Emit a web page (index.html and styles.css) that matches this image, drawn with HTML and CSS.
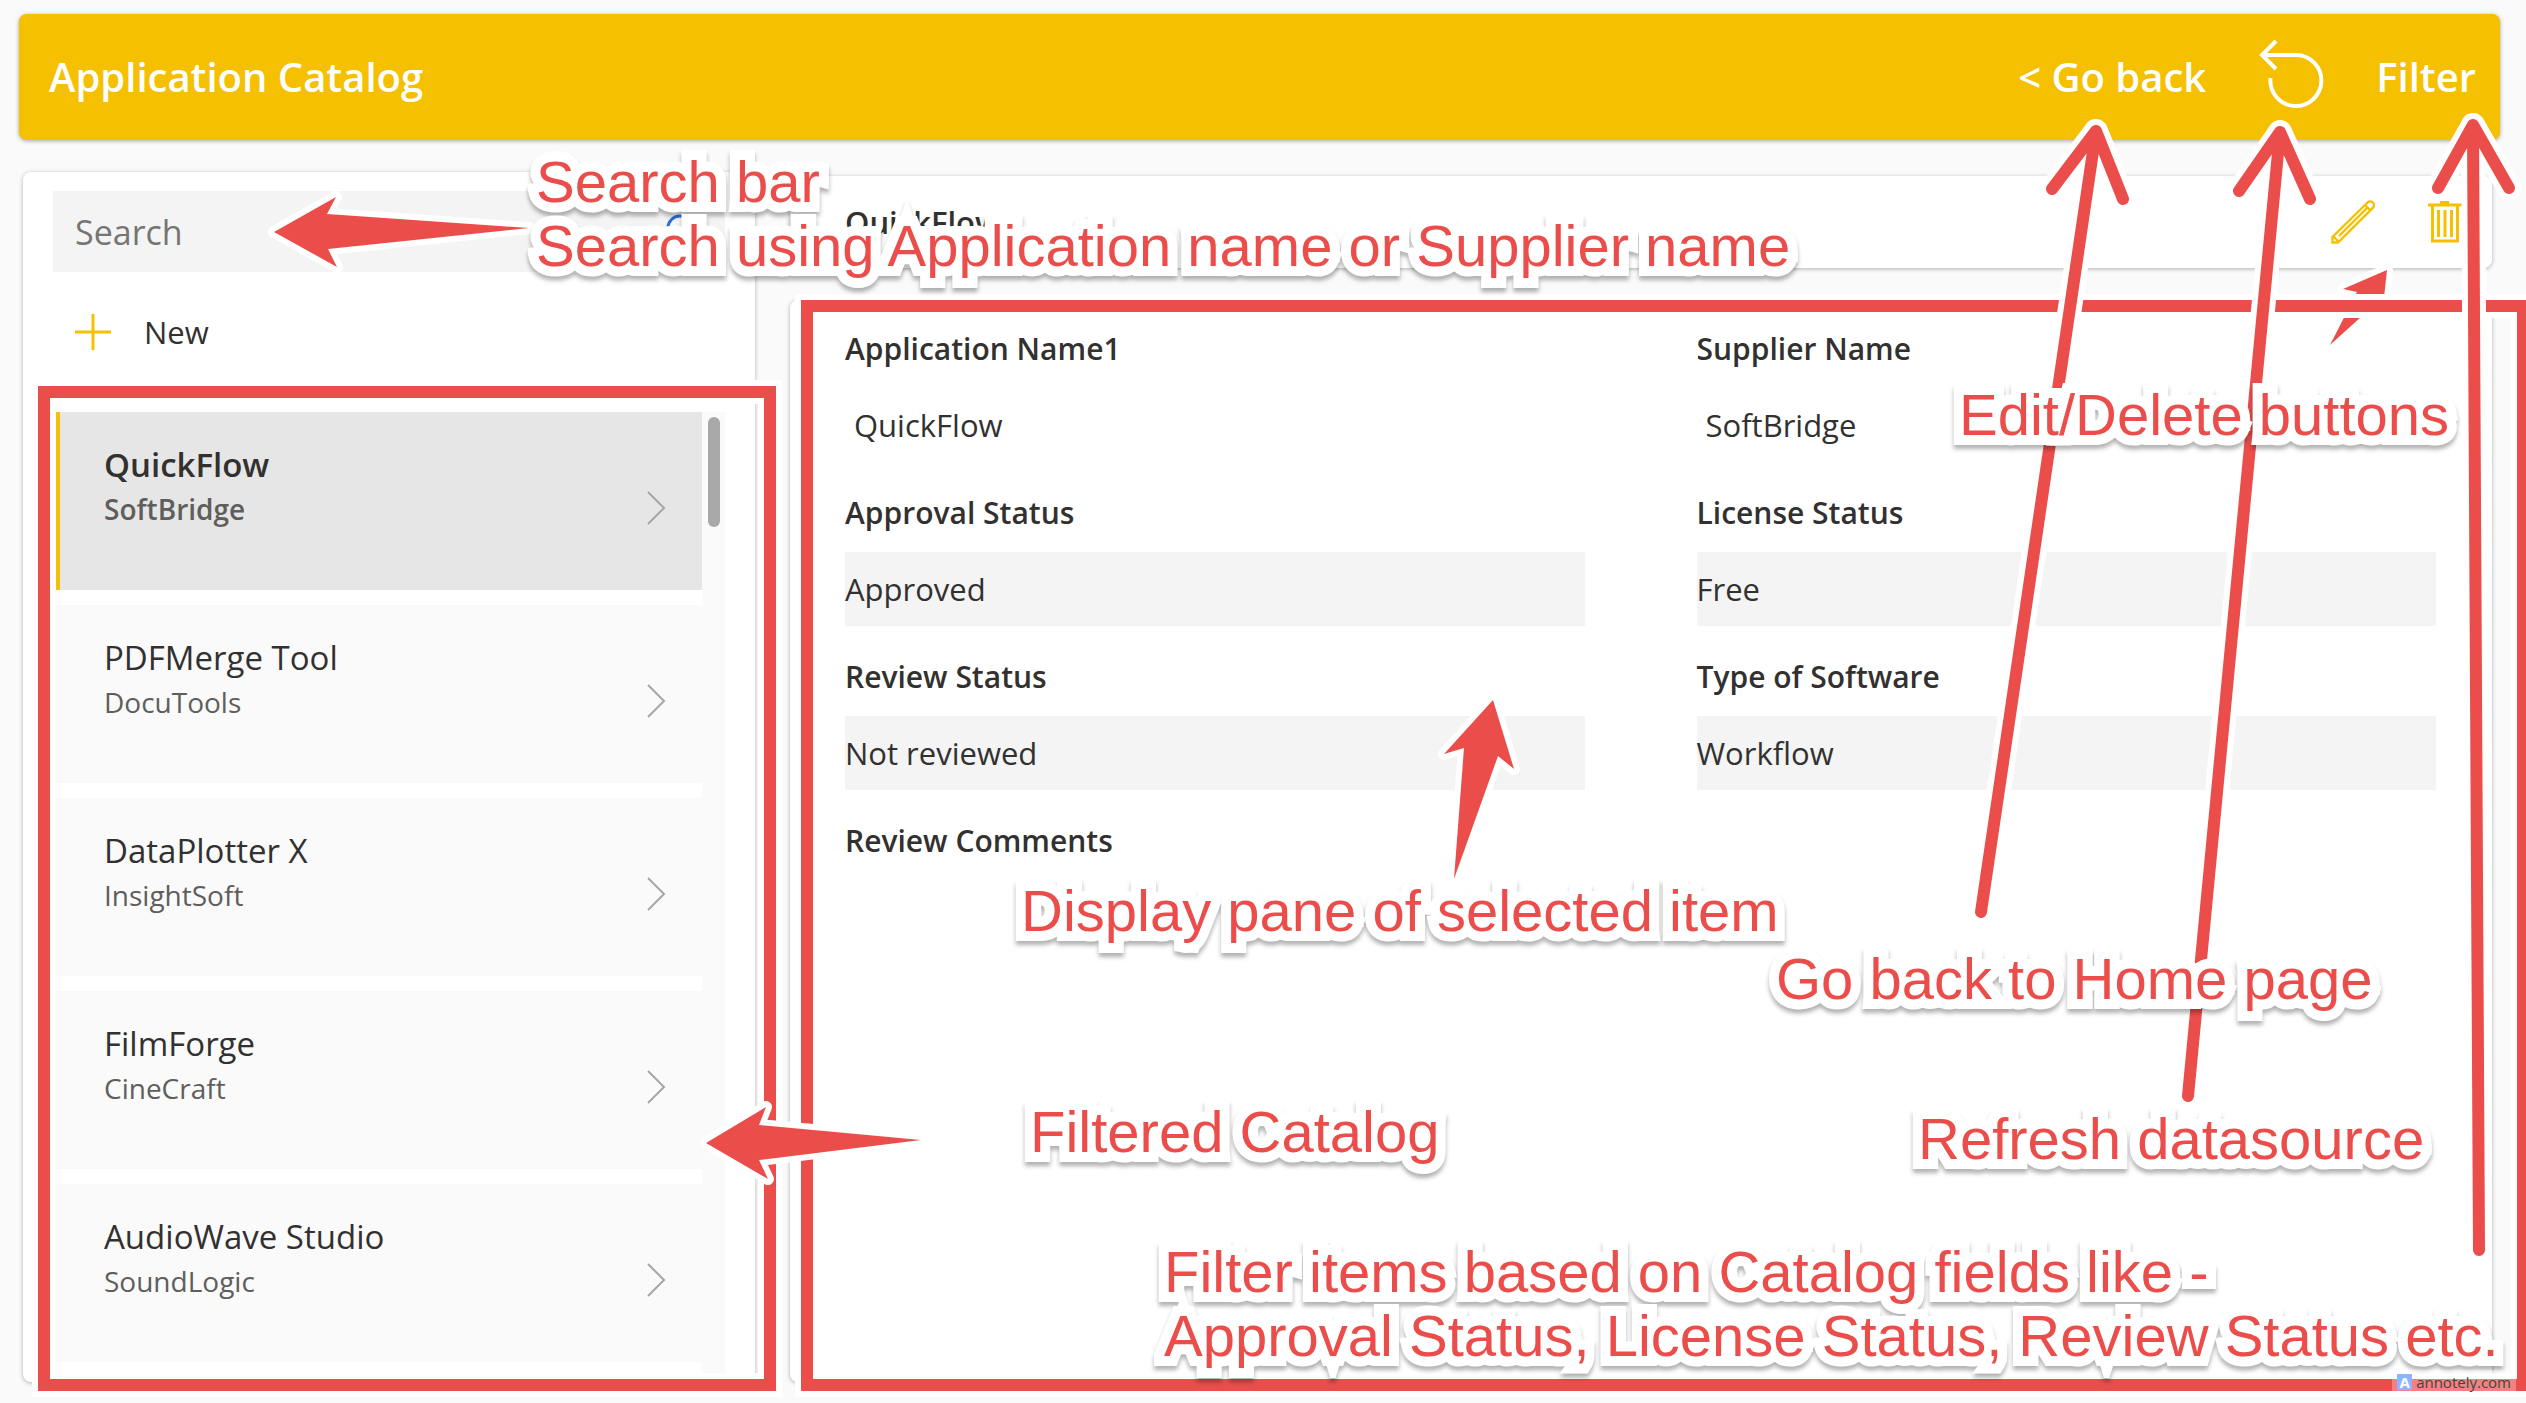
FILE: index.html
```html
<!DOCTYPE html>
<html lang="en">
<head>
<meta charset="utf-8">
<title>Application Catalog</title>
<link rel="stylesheet" href="styles.css">
</head>
<body>
<div class="app">
  <header class="topbar">
    <h1 class="topbar-title">Application Catalog</h1>
    <nav class="topbar-actions">
      <button class="text-button" type="button">&lt; Go back</button>
      <button class="icon-button" type="button" aria-label="Refresh">
        <svg width="66" height="74" viewBox="0 0 66 74"><path d="M18 2 4 16 18 30M4 16H38A25.500 25.500 0 1 1 12.500 39" fill="none" stroke="#fff" stroke-width="4"/></svg>
      </button>
      <button class="text-button" type="button">Filter</button>
    </nav>
  </header>

  <main class="columns">
    <aside class="panel sidebar">
      <div class="search">
        <input class="search-input" type="text" placeholder="Search" aria-label="Search">
        <svg class="search-icon" width="38" height="38" viewBox="0 0 38 38"><circle cx="15" cy="15" r="12" fill="none" stroke="#2a6fd6" stroke-width="3"/><path d="M24 24 34 34" stroke="#2a6fd6" stroke-width="3"/></svg>
      </div>
      <button class="new-button" type="button">
        <svg width="36" height="36" viewBox="0 0 36 36"><path d="M18 0V36M0 18H36" stroke="#f5c000" stroke-width="3"/></svg>
        <span>New</span>
      </button>
      <div class="gallery">
        <ul class="items">
          <li class="item item-selected"><div><p class="item-name">QuickFlow</p><p class="item-supplier">SoftBridge</p></div><svg class="chevron" width="20" height="34" viewBox="0 0 20 34"><path d="M2 1 18 17 2 33"/></svg></li>
          <li class="item"><div><p class="item-name">PDFMerge Tool</p><p class="item-supplier">DocuTools</p></div><svg class="chevron" width="20" height="34" viewBox="0 0 20 34"><path d="M2 1 18 17 2 33"/></svg></li>
          <li class="item"><div><p class="item-name">DataPlotter X</p><p class="item-supplier">InsightSoft</p></div><svg class="chevron" width="20" height="34" viewBox="0 0 20 34"><path d="M2 1 18 17 2 33"/></svg></li>
          <li class="item"><div><p class="item-name">FilmForge</p><p class="item-supplier">CineCraft</p></div><svg class="chevron" width="20" height="34" viewBox="0 0 20 34"><path d="M2 1 18 17 2 33"/></svg></li>
          <li class="item"><div><p class="item-name">AudioWave Studio</p><p class="item-supplier">SoundLogic</p></div><svg class="chevron" width="20" height="34" viewBox="0 0 20 34"><path d="M2 1 18 17 2 33"/></svg></li>
        </ul>
        <div class="scroll-track"><div class="scroll-thumb"></div></div>
      </div>
    </aside>

    <section class="detail">
      <div class="panel detail-bar">
        <h2 class="detail-title">QuickFlow</h2>
        <div class="detail-actions">
          <button class="icon-button" type="button" aria-label="Edit">
            <svg width="44" height="44" viewBox="0 0 44 44" fill="none" stroke="#f5c000" stroke-width="2.4"><path d="M1.500 42.500V37L36.500 2.500A3.700 3.700 0 0 1 41.800 7.800L7 42.500ZM34 5 39.500 10.500M2.500 36.500 7.500 41.500M8 36 36 8"/></svg>
          </button>
          <button class="icon-button" type="button" aria-label="Delete">
            <svg width="34" height="44" viewBox="0 0 34 44" fill="none" stroke="#f5c000" stroke-width="3"><path d="M0 5H34M12 2.500H21M4.500 5V41H29.500V5M10.500 10V37M17 10V37M23.500 10V37"/></svg>
          </button>
        </div>
      </div>
      <div class="panel detail-body">
        <dl class="fields">
          <div class="field"><dt>Application Name1</dt><dd class="plain">QuickFlow</dd></div>
          <div class="field"><dt>Supplier Name</dt><dd class="plain">SoftBridge</dd></div>
          <div class="field"><dt>Approval Status</dt><dd>Approved</dd></div>
          <div class="field"><dt>License Status</dt><dd>Free</dd></div>
          <div class="field"><dt>Review Status</dt><dd>Not reviewed</dd></div>
          <div class="field"><dt>Type of Software</dt><dd>Workflow</dd></div>
          <div class="field"><dt>Review Comments</dt><dd class="plain"></dd></div>
        </dl>
      </div>
    </section>
  </main>
</div>

<div class="annotations">
  <svg class="shapes" viewBox="0 0 2526 1403" aria-hidden="true">
    <path class="block" d="M2387 270 2343 289 2357 292 2330 345 2372 307 2382 316Z"/>
    <g class="frame"><rect class="halo" x="44" y="392" width="726" height="993"/><rect class="ink" x="44" y="392" width="726" height="993"/></g>
    <g class="frame"><rect class="halo" x="807" y="306" width="1716" height="1079"/><rect class="ink" x="807" y="306" width="1716" height="1079"/></g>
    <path class="block" d="M274 232 336 197 327 214 529 228 328 249 337 267Z"/>
    <path class="block" d="M706 1143 766 1107 759 1125 921 1140 759 1160 768 1179Z"/>
    <path class="block" d="M1493 700 1514 769 1498 756 1454 879 1464 748 1444 754Z"/>
    <g class="line"><path class="halo" d="M2052 189 2096 131 2123 199M2096 131 1981 912"/><path class="ink" d="M2052 189 2096 131 2123 199M2096 131 1981 912"/></g>
    <g class="line"><path class="halo" d="M2239 191 2280 132 2310 199M2280 132 2188 1096"/><path class="ink" d="M2239 191 2280 132 2310 199M2280 132 2188 1096"/></g>
    <g class="line"><path class="halo" d="M2438 188 2473 125 2509 188M2473 125 2479 1250"/><path class="ink" d="M2438 188 2473 125 2509 188M2473 125 2479 1250"/></g>
  </svg>
  <p class="note note-search">Search bar<br>Search using Application name or Supplier name</p>
  <p class="note note-edit">Edit/Delete buttons</p>
  <p class="note note-display">Display pane of selected item</p>
  <p class="note note-back">Go back to Home page</p>
  <p class="note note-catalog">Filtered Catalog</p>
  <p class="note note-refresh">Refresh datasource</p>
  <p class="note note-filter">Filter items based on Catalog fields like -<br>Approval Status, License Status, Review Status etc.</p>
  <div class="watermark"><span class="watermark-logo">A</span>annotely.com</div>
</div>
</body>
</html>
```
FILE: styles.css
```css
* { box-sizing: border-box; }
body {
  margin: 0;
  background: #fafafa;
  color: #323130;
  font-family: "Open Sans", "Noto Sans", sans-serif;
}
h1, h2, p, ul, dl, dd { margin: 0; padding: 0; }
button {
  padding: 0;
  border: 0;
  background: none;
  color: inherit;
  font: inherit;
}
svg { display: block; }

.app {
  display: flex;
  flex-direction: column;
  min-height: 100vh;
  padding: 14px 26px 25px 19px;
}

.topbar {
  display: flex;
  align-items: center;
  justify-content: space-between;
  height: 126px;
  padding: 0 24px 2px 30px;
  border-radius: 8px;
  background: #f5c000;
  color: #fff;
  box-shadow: 0 1px 4px rgba(0, 0, 0, .35);
}
.topbar-title { font-size: 40px; font-weight: 600; }
.topbar-actions { display: flex; align-items: center; gap: 52px; }
.text-button { font-size: 40px; font-weight: 600; }

.columns {
  display: grid;
  grid-template-columns: 732px 1fr;
  gap: 35px;
  flex: 1;
  padding: 32px 8px 0 4px;
}
.panel {
  border-radius: 8px;
  background: #fff;
  box-shadow: 0 1px 4px rgba(0, 0, 0, .3);
}

.sidebar { display: flex; flex-direction: column; padding: 19px 30px 5px; }
.search {
  display: flex;
  align-items: center;
  height: 81px;
  padding: 0 22px;
  background: #f4f4f4;
}
.search-input {
  flex: 1;
  min-width: 0;
  padding: 0;
  border: 0;
  background: none;
  font: inherit;
  font-size: 34px;
}
.search-input::placeholder { color: #757575; opacity: 1; }
.new-button {
  display: flex;
  align-items: center;
  gap: 33px;
  height: 120px;
  padding-left: 22px;
  font-size: 31px;
}
.gallery {
  display: flex;
  flex: 1;
  margin-top: 20px;
  padding-left: 3px;
}
.items { flex: 1; list-style: none; }
.item {
  display: flex;
  align-items: center;
  justify-content: space-between;
  height: 178px;
  margin-bottom: 15px;
  padding: 0 36px 0 44px;
  border-left: 4px solid #fafafa;
  background: #fafafa;
}
.item-selected { border-left-color: #f5c000; background: #e6e6e6; font-weight: 600; }
.item div { padding-bottom: 28px; }
.item-name { font-size: 33px; line-height: 44px; }
.item-supplier { color: #605e5c; font-size: 28px; line-height: 44px; }
.chevron { margin-top: 14px; fill: none; stroke: #a6a6a6; stroke-width: 2; }
.scroll-track { width: 23px; padding: 5px 5px 0 6px; background: #fafafa; }
.scroll-thumb { height: 110px; border-radius: 6px; background: #a8a8a8; }

.detail { display: flex; flex-direction: column; gap: 32px; padding-top: 4px; }
.detail-bar {
  display: flex;
  align-items: center;
  justify-content: space-between;
  height: 92px;
  padding: 0 30px 0 55px;
}
.detail-title { font-size: 31px; font-weight: 600; }
.detail-actions { display: flex; gap: 53px; }
.detail-body { flex: 1; padding: 18px 56px 20px 55px; }
.fields {
  display: grid;
  grid-template-columns: 1fr 1fr;
  column-gap: 112px;
}
.field { height: 164px; }
.field dt { font-size: 30px; font-weight: 600; line-height: 62px; }
.field dd {
  height: 74px;
  margin-top: 8px;
  background: #f4f4f4;
  font-size: 31px;
  line-height: 74px;
}
.field .plain { padding-left: 9px; background: none; }

.annotations {
  position: absolute;
  inset: 0;
  overflow: hidden;
  pointer-events: none;
}
.shapes { width: 100%; }
.block { fill: #eb4d4b; stroke: #fff; stroke-width: 12; stroke-linejoin: round; paint-order: stroke; }
.frame, .line { fill: none; stroke-width: 12; }
.line { stroke-linecap: round; stroke-linejoin: round; }
.halo { stroke: #fff; stroke-width: 24; }
.ink { stroke: #eb4d4b; }
.note {
  position: absolute;
  color: #eb4d4b;
  font: 58px/64px "Liberation Sans", Arial, sans-serif;
  white-space: nowrap;
  -webkit-text-stroke: 20px #fff;
  paint-order: stroke fill;
  stroke-linejoin: round;
  filter: drop-shadow(0 4px 2px rgba(0, 0, 0, .3));
}
.note-search { left: 536px; top: 150px; }
.note-edit { left: 1959px; top: 383px; }
.note-display { left: 1021px; top: 879px; }
.note-back { left: 1776px; top: 947px; }
.note-catalog { left: 1030px; top: 1100px; }
.note-refresh { left: 1918px; top: 1107px; }
.note-filter { left: 1164px; top: 1240px; }
.watermark {
  position: absolute;
  right: 10px;
  bottom: 10px;
  display: flex;
  align-items: center;
  gap: 4px;
  height: 23px;
  padding: 0 5px;
  background: rgba(255, 255, 255, .3);
  color: #444;
  font-size: 15px;
}
.watermark-logo {
  width: 15px;
  background: #8fb4ff;
  color: #fff;
  font-weight: 700;
  line-height: 16px;
  text-align: center;
}
```
